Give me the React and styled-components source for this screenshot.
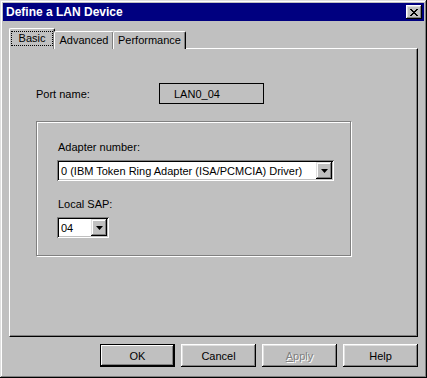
import styled, { createGlobalStyle } from "styled-components";

const GlobalStyle = createGlobalStyle`
  html, body {
    margin: 0;
    padding: 0;
    background: #c0c0c0;
  }
  * {
    box-sizing: border-box;
  }
`;

const Window = styled.div`
  width: 427px;
  height: 378px;
  padding: 3px;
  background: #c0c0c0;
  font-family: "Liberation Sans", Arial, sans-serif;
  font-size: 11px;
  color: #000;
  display: flex;
  flex-direction: column;
  box-shadow: inset -1px -1px #000, inset 1px 1px #dfdfdf,
    inset -2px -2px #808080, inset 2px 2px #fff;
`;

const TitleBar = styled.div`
  height: 18px;
  background: #000080;
  display: flex;
  align-items: center;
  justify-content: space-between;
  padding: 0 2px 0 3px;
`;

const Title = styled.span`
  color: #fff;
  font-weight: bold;
  font-size: 12px;
`;

const CloseButton = styled.div`
  width: 16px;
  height: 14px;
  background: #c0c0c0;
  display: flex;
  align-items: center;
  justify-content: center;
  box-shadow: inset -1px -1px #000, inset 1px 1px #fff,
    inset -2px -2px #808080, inset 2px 2px #dfdfdf;
`;

const Body = styled.div`
  flex: 1;
  display: flex;
  flex-direction: column;
  padding: 8px 6px 0 6px;
`;

const TabRow = styled.div`
  display: flex;
  align-items: flex-end;
  height: 20px;
  position: relative;
  z-index: 1;
  margin-bottom: -1px;
`;

const Tab = styled.div`
  width: ${(p) => p.$width};
  height: ${(p) => (p.$active ? "21px" : "18px")};
  margin-left: ${(p) => (p.$first ? "0" : "-1px")};
  background: #c0c0c0;
  display: flex;
  align-items: center;
  justify-content: center;
  border-top: 1px solid #fff;
  border-left: 1px solid #fff;
  border-right: 1px solid #000;
  border-top-left-radius: 2px;
  border-top-right-radius: 2px;
  box-shadow: inset -1px 0 #808080;
  padding-bottom: ${(p) => (p.$active ? "2px" : "0")};
`;

const TabLabel = styled.span`
  padding: 0 ${(p) => (p.$focus ? "7px" : "0")};
  outline: ${(p) => (p.$focus ? "1px dotted #000" : "none")};
  line-height: 13px;
`;

const Panel = styled.div`
  height: 289px;
  background: #c0c0c0;
  border-top: 1px solid #fff;
  border-left: 1px solid #fff;
  border-right: 1px solid #000;
  border-bottom: 1px solid #000;
  box-shadow: inset -1px -1px #808080;
  padding: 34px 0 0 26px;
  display: flex;
  flex-direction: column;
`;

const FieldRow = styled.div`
  display: flex;
  align-items: center;
  height: 21px;
`;

const Label = styled.span`
  display: block;
  width: ${(p) => p.$width || "auto"};
`;

const ValueBox = styled.div`
  width: 105px;
  height: 21px;
  border: 1px solid #000;
  padding-left: 14px;
  display: flex;
  align-items: center;
`;

const GroupBox = styled.div`
  margin-top: 17px;
  width: 315px;
  height: 135px;
  border: 1px solid #808080;
  box-shadow: 1px 1px #fff, inset 1px 1px #fff;
  padding: 18px 0 0 20px;
  display: flex;
  flex-direction: column;
`;

const FieldLabel = styled.span`
  display: block;
  margin-left: 1px;
  height: 15px;
  line-height: 15px;
  margin-bottom: 5px;
`;

const Combo = styled.div`
  width: ${(p) => p.$width};
  height: 21px;
  background: #fff;
  display: flex;
  align-items: center;
  justify-content: space-between;
  padding: 2px;
  box-shadow: inset 1px 1px #808080, inset -1px -1px #fff,
    inset 2px 2px #000, inset -2px -2px #c0c0c0;
  margin-bottom: ${(p) => p.$mb || "0"};
`;

const ComboText = styled.span`
  padding-left: 2px;
  white-space: nowrap;
`;

const DropButton = styled.div`
  width: 16px;
  height: 17px;
  background: #c0c0c0;
  display: flex;
  align-items: center;
  justify-content: center;
  box-shadow: inset -1px -1px #000, inset 1px 1px #dfdfdf,
    inset -2px -2px #808080, inset 2px 2px #fff;
`;

const ButtonRow = styled.div`
  display: flex;
  justify-content: flex-end;
  gap: 6px;
  margin-top: 7px;
`;

const Button = styled.div`
  width: 75px;
  height: 23px;
  display: flex;
  align-items: center;
  justify-content: center;
  box-shadow: ${(p) =>
    p.$default
      ? "inset 1px 1px #000, inset -1px -1px #000, inset -2px -2px #000, inset 2px 2px #fff, inset -3px -3px #808080"
      : "inset -1px -1px #000, inset 1px 1px #fff, inset -2px -2px #808080, inset 2px 2px #dfdfdf"};
  color: ${(p) => (p.$disabled ? "#808080" : "#000")};
  text-shadow: ${(p) => (p.$disabled ? "1px 1px #fff" : "none")};
`;

const Arrow = () => (
  <svg width="7" height="4" viewBox="0 0 7 4">
    <path d="M0 0h7L3.5 4z" fill="#000" />
  </svg>
);

const CloseIcon = () => (
  <svg width="8" height="7" viewBox="0 0 8 7">
    <path
      d="M0 0h2v1h1v1h2V1h1V0h2v1H7v1H6v1H5v1h1v1h1v1h1v1H6V6H5V5H3v1H2v1H0V6h1V5h1V4h1V3H2V2H1V1H0z"
      fill="#000"
    />
  </svg>
);

function App() {
  return (
    <>
      <GlobalStyle />
      <Window>
        <TitleBar>
          <Title>Define a LAN Device</Title>
          <CloseButton>
            <CloseIcon />
          </CloseButton>
        </TitleBar>
        <Body>
          <TabRow>
            <Tab $active $first $width="46px">
              <TabLabel $focus>Basic</TabLabel>
            </Tab>
            <Tab $width="60px">
              <TabLabel>Advanced</TabLabel>
            </Tab>
            <Tab $width="73px">
              <TabLabel>Performance</TabLabel>
            </Tab>
          </TabRow>
          <Panel>
            <FieldRow>
              <Label $width="123px">Port name:</Label>
              <ValueBox>LAN0_04</ValueBox>
            </FieldRow>
            <GroupBox>
              <FieldLabel>Adapter number:</FieldLabel>
              <Combo $width="277px" $mb="16px">
                <ComboText>0 (IBM Token Ring Adapter (ISA/PCMCIA) Driver)</ComboText>
                <DropButton>
                  <Arrow />
                </DropButton>
              </Combo>
              <FieldLabel>Local SAP:</FieldLabel>
              <Combo $width="52px">
                <ComboText>04</ComboText>
                <DropButton>
                  <Arrow />
                </DropButton>
              </Combo>
            </GroupBox>
          </Panel>
          <ButtonRow>
            <Button $default>OK</Button>
            <Button>Cancel</Button>
            <Button $disabled>
              <span>
                <u>A</u>pply
              </span>
            </Button>
            <Button>Help</Button>
          </ButtonRow>
        </Body>
      </Window>
    </>
  );
}

export default App;
